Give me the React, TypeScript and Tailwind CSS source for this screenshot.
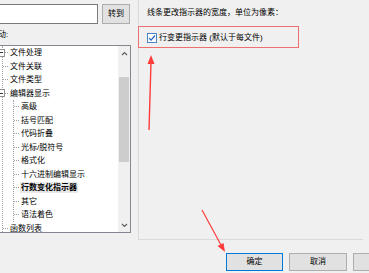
import React from "react";

type Item = { label: string; level: 1 | 2; expander?: boolean; selected?: boolean };

const items: Item[] = [
  { label: "文件处理", level: 1, expander: true },
  { label: "文件关联", level: 1 },
  { label: "文件类型", level: 1 },
  { label: "编辑器显示", level: 1, expander: true },
  { label: "高级", level: 2 },
  { label: "括号匹配", level: 2 },
  { label: "代码折叠", level: 2 },
  { label: "光标/脱符号", level: 2 },
  { label: "格式化", level: 2 },
  { label: "十六进制编辑显示", level: 2 },
  { label: "行数变化指示器", level: 2, selected: true },
  { label: "其它", level: 2 },
  { label: "语法着色", level: 2 },
  { label: "函数列表", level: 1 },
];

const font = { fontFamily: '"Liberation Sans", "Noto Sans CJK SC", sans-serif' };

function Row({ item }: { item: Item }) {
  return (
    <div className="flex items-center h-[13.5px] whitespace-nowrap">
      {item.expander ? (
        <>
          <span className="-ml-[6px] w-[8px] h-[8px] border border-[#919191] bg-white flex items-center justify-center shrink-0">
            <span className="w-[4px] h-px bg-[#333]" />
          </span>
          <span className="w-[3px] border-t border-dotted border-[#a0a0a0] shrink-0" />
        </>
      ) : (
        <span className="w-[5px] border-t border-dotted border-[#a0a0a0] shrink-0" />
      )}
      <span
        className={
          item.selected
            ? "ml-px px-px font-bold bg-[#e8e8e8] text-black leading-[11px]"
            : "ml-px px-px text-black leading-[11px]"
        }
      >
        {item.label}
      </span>
    </div>
  );
}

function Tree() {
  const top = items.slice(0, 4);
  const children = items.slice(4, 13);
  const last = items[13];
  return (
    <div className="flex-1 overflow-hidden">
      <div className="ml-[2px] h-full border-l border-dotted border-[#a0a0a0]">
        {top.map((it) => (
          <Row key={it.label} item={it} />
        ))}
        <div className="ml-[10px] border-l border-dotted border-[#a0a0a0]">
          {children.map((it) => (
            <Row key={it.label} item={it} />
          ))}
        </div>
        <Row item={last} />
      </div>
    </div>
  );
}

function ScrollBar() {
  return (
    <div className="w-[12px] bg-[#f0f0f0] flex flex-col items-center">
      <div className="h-[14px] flex items-center justify-center">
        <svg width="7" height="5" viewBox="0 0 7 5">
          <path d="M1 4 L3.5 1.5 L6 4" stroke="#606060" strokeWidth="1.2" fill="none" />
        </svg>
      </div>
      <div className="mt-[17px] w-[10px] h-[85px] bg-[#cdcdcd]" />
      <div className="flex-1" />
      <div className="h-[14px] flex items-center justify-center">
        <svg width="7" height="5" viewBox="0 0 7 5">
          <path d="M1 1 L3.5 3.5 L6 1" stroke="#606060" strokeWidth="1.2" fill="none" />
        </svg>
      </div>
    </div>
  );
}

export default function App() {
  return (
    <div className="relative w-[369px] h-[273px] bg-[#f0f0f0] overflow-hidden text-[8px]" style={font}>
      <div className="flex h-[240px]">
        {/*left column*/}
        <div className="w-[131px] shrink-0 flex flex-col">
          <div className="flex items-center gap-[4px] pt-[4px]">
            <div className="w-[98px] h-[20px] bg-white border border-[#7a7a7a] border-l-0" />
            <div className="w-[28px] h-[20px] bg-[#e1e1e1] border border-[#adadad] flex items-center justify-center text-black">
              转到
            </div>
          </div>
          <div className="h-[21px] flex items-center -ml-[2px] text-black">动:</div>
          <div className="h-[188px] bg-white border-t border-r border-b border-[#828790] flex">
            <Tree />
            <ScrollBar />
          </div>
        </div>

        {/*right group*/}
        <div className="ml-[7px] w-[225px] h-[240px] border-l border-b border-[#dadada] pl-[8px] pt-[8px]">
          <div className="text-black leading-[10px]">线条更改指示器的宽度，单位为像素：</div>
          <div className="mt-[14px] flex items-center">
            <span className="w-[10px] h-[10px] border border-[#4a86c8] bg-white flex items-center justify-center shrink-0">
              <svg width="8" height="8" viewBox="0 0 8 8">
                <path d="M1 4.2 L3 6.2 L7 1.5" stroke="#2267c4" strokeWidth="1.2" fill="none" />
              </svg>
            </span>
            <span className="ml-[2px] text-black">行变更指示器 (默认于每文件)</span>
          </div>
        </div>
      </div>

      {/*buttons*/}
      <div className="flex justify-end gap-[6px] -mr-[41px] pt-[13px]">
        <div className="w-[57px] h-[18px] bg-[#e1e1e1] border border-[#0078d7] flex items-center justify-center text-black">
          确定
        </div>
        <div className="w-[58px] h-[18px] bg-[#e1e1e1] border border-[#adadad] flex items-center justify-center text-black">
          取消
        </div>
        <div className="w-[57px] h-[18px] bg-[#e1e1e1] border border-[#adadad]" />
      </div>

      {/*annotation: red box and arrows*/}
      <div className="absolute left-[138px] top-[26px] w-[161px] h-[22px] border-[1.5px] border-[#ec7070]" />
      <svg className="absolute left-0 top-0 pointer-events-none" width="369" height="273">
        <line x1="149" y1="130" x2="151" y2="62" stroke="#ff3b3b" strokeWidth="1.4" />
        <polygon points="151,55 147.5,64 154.5,64" fill="#ff3b3b" />
        <line x1="202" y1="210" x2="221" y2="245" stroke="#ff3b3b" strokeWidth="1.2" />
        <polygon points="225,252 217.5,246 223.5,243" fill="#ff3b3b" />
      </svg>
    </div>
  );
}
